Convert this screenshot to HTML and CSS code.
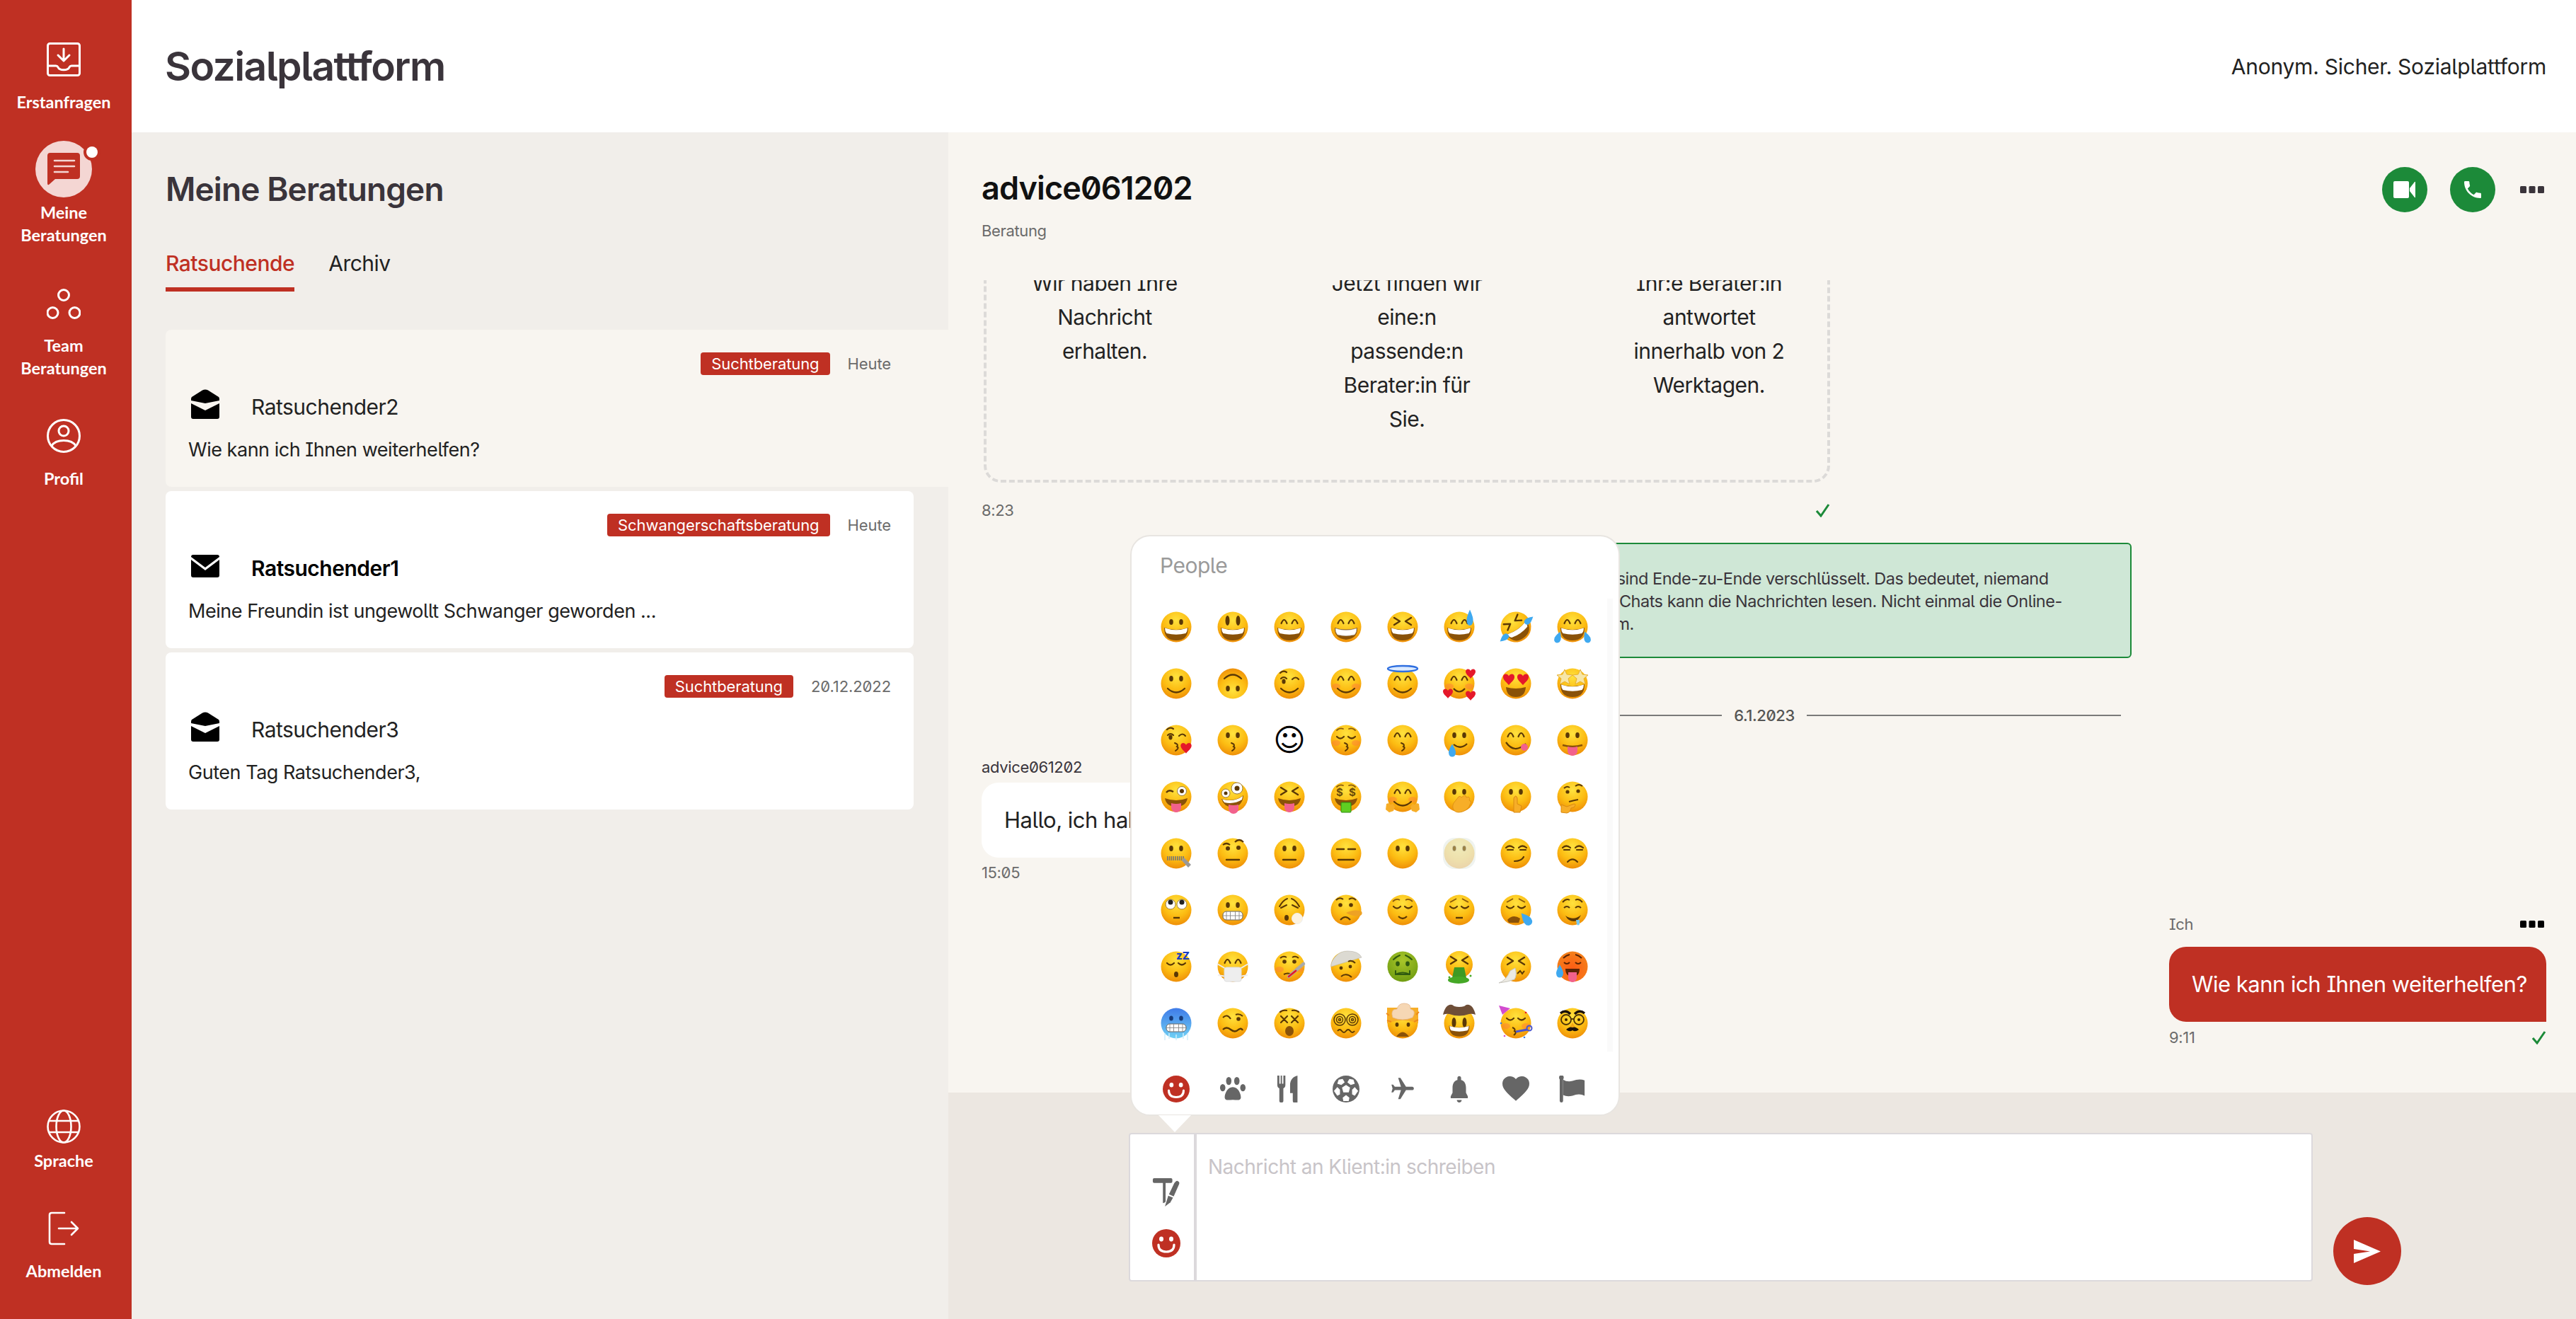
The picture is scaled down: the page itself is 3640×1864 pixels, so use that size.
FILE: index.html
```html
<!DOCTYPE html>
<html lang="de">
<head>
    <meta charset="utf-8">
    <title>Sozialplattform</title>
    <link rel="stylesheet" href="styles.css">
</head>
<body>
<!-- shared parts for the emoji -->
<svg class="sprite" aria-hidden="true">
    <defs>
        <radialGradient id="fc" cx=".5" cy=".28" r=".78"><stop offset="0" stop-color="#ffe23e"/><stop offset=".55" stop-color="#fcbc12"/><stop offset="1" stop-color="#ec8606"/></radialGradient>
        <radialGradient id="fg" cx=".5" cy=".3" r=".75"><stop offset="0" stop-color="#a8c62a"/><stop offset="1" stop-color="#6d9a10"/></radialGradient>
        <radialGradient id="fr" cx=".5" cy=".6" r=".75"><stop offset="0" stop-color="#ff5a14"/><stop offset="1" stop-color="#f08a1c"/></radialGradient>
        <linearGradient id="fb" x1="0" y1="0" x2="0" y2="1"><stop offset="0" stop-color="#3f7be8"/><stop offset="1" stop-color="#6fd0f4"/></linearGradient>
        <circle id="f" cx="22" cy="22" r="21.5" fill="url(#fc)"/>
        <g id="eo" fill="#5a3806"><ellipse cx="15" cy="15" rx="2.8" ry="4"/><ellipse cx="29" cy="15" rx="2.8" ry="4"/></g>
        <g id="el" fill="#5a3806"><ellipse cx="14.5" cy="13" rx="3" ry="7"/><ellipse cx="29.5" cy="13" rx="3" ry="7"/></g>
        <path id="ea" d="M10.5 17Q14.5 7 18.5 17M25.5 17Q29.5 7 33.5 17" fill="none" stroke="#5a3806" stroke-width="2.2" stroke-linecap="round"/>
        <path id="ex" d="M10 9L18 14L10 19M34 9L26 14L34 19" fill="none" stroke="#5a3806" stroke-width="2.4" stroke-linecap="round" stroke-linejoin="round"/>
        <path id="ec" d="M9 17Q14 22 19 17M25 17Q30 22 35 17" fill="none" stroke="#5a3806" stroke-width="2.2" stroke-linecap="round"/>
        <path id="eb" d="M9 8Q13 4 18 6M26 6Q31 4 35 8" fill="none" stroke="#8a5a0c" stroke-width="1.8" stroke-linecap="round"/>
        <g id="gr"><path d="M5 23Q22 29 39 23Q39 41 22 41Q5 41 5 23Z" fill="#8a5208"/><path d="M6 23.5Q22 29 38 23.5Q38 28 35.5 31Q22 34.5 8.5 31Q6 28 6 23.5Z" fill="#fff"/></g>
        <path id="sm" d="M10 29Q22 40 34 29" fill="none" stroke="#5a3806" stroke-width="2.2" stroke-linecap="round"/>
        <path id="ks" d="M20 26Q26 28 23 31Q27 33 21 37" fill="none" stroke="#5a3806" stroke-width="2" stroke-linecap="round"/>
        <path id="fl" d="M13 31H31" stroke="#5a3806" stroke-width="2.4" stroke-linecap="round"/>
        <path id="sd" d="M15 34Q22 27 29 34" fill="none" stroke="#5a3806" stroke-width="2.2" stroke-linecap="round"/>
        <g id="ck" fill="#ff7a3c" opacity=".45"><ellipse cx="8" cy="26" rx="6" ry="4"/><ellipse cx="36" cy="26" rx="6" ry="4"/></g>
        <path id="mt" d="M6 24Q22 30 38 24Q36 36 22 36Q8 36 6 24Z" fill="#8a5208"/>
        <path id="tg" d="M15 31Q22 33 29 31V37A7 7 0 0 1 15 37Z" fill="#f2618c"/>
        <path id="ht" d="M0-3C-2-7-7-6-7-2C-7 2-2 5 0 8C2 5 7 2 7-2C7-6 2-7 0-3Z" fill="#e5182a"/>
        <path id="dr" d="M0-7Q5 1 4 4A4 4 0 0 1-4 4Q-5 1 0-7Z" fill="#3fa9f0"/>
        <path id="wk" d="M10 15Q14 11 18 15M26 16Q31 11 35 16M9 7Q13 3 18 6" fill="none" stroke="#5a3806" stroke-width="2.2" stroke-linecap="round"/>
        <g id="we"><circle cx="14" cy="14" r="7" fill="#fff" stroke="#9a7a3a" stroke-width="1"/><circle cx="30" cy="14" r="7" fill="#fff" stroke="#9a7a3a" stroke-width="1"/></g>
        <path id="hd" d="M21 44C14 44 11 37 14 31L21 22Q24 20 25 23L29 20Q32 20 32 23L35 22Q38 24 36 27L38 28Q40 30 37 33C36 39 28 44 21 44Z" fill="#f7ae28" stroke="#d98a12" stroke-width=".8"/>
        <path id="st" d="M12 2L15 9L23 10L17 15L19 23L12 19L5 23L7 15L1 10L9 9Z" fill="#f6e6a8" stroke="#e8b030"/>
    </defs>
</svg>

<aside class="sidebar">
    <div class="nav-item first">
        <svg class="nav-icon" viewBox="0 0 48 48" fill="none" stroke="#fff" stroke-width="3" stroke-linecap="round" stroke-linejoin="round">
            <rect x="1.5" y="1.5" width="45" height="45" rx="3"/>
            <path d="M24 9V25M16 18L24 26L32 18M2 33H13Q15 33 16 35C18 40 30 40 32 35Q33 33 35 33H46"/>
        </svg>
        <span class="nav-label">Erstanfragen</span>
    </div>
    <div class="nav-item active">
        <div class="nav-bubble">
            <svg class="nav-icon" viewBox="0 0 48 48">
                <path d="M5 1H43A4 4 0 0 1 47 5V34A4 4 0 0 1 43 38H12L3 46Q1 47 1 44V5A4 4 0 0 1 5 1Z" fill="#bf3023"/>
                <path d="M11 12H39M11 20H39M11 28H30" stroke="#f4d6d3" stroke-width="2.6" stroke-linecap="round"/>
            </svg>
            <span class="nav-dot"></span>
        </div>
        <span class="nav-label">Meine<br>Beratungen</span>
    </div>
    <div class="nav-item">
        <svg class="nav-icon" viewBox="0 0 48 48" fill="none" stroke="#fff" stroke-width="3">
            <circle cx="24" cy="13" r="7.5"/><circle cx="8.5" cy="38" r="7.5"/><circle cx="39.5" cy="38" r="7.5"/>
        </svg>
        <span class="nav-label">Team<br>Beratungen</span>
    </div>
    <div class="nav-item">
        <svg class="nav-icon" viewBox="0 0 48 48" fill="none" stroke="#fff" stroke-width="3" stroke-linecap="round">
            <circle cx="24" cy="24" r="22.5"/><circle cx="24" cy="17" r="7"/>
            <path d="M7 38C13 28 35 28 41 38"/>
        </svg>
        <span class="nav-label">Profil</span>
    </div>
    <div class="nav-item bottom tight">
        <svg class="nav-icon" viewBox="0 0 48 48" fill="none" stroke="#fff" stroke-width="2.6">
            <circle cx="24" cy="24" r="22.5"/><ellipse cx="24" cy="24" rx="10.5" ry="22.5"/>
            <path d="M3 16H45M3 32H45"/>
        </svg>
        <span class="nav-label">Sprache</span>
    </div>
    <div class="nav-item">
        <svg class="nav-icon" viewBox="0 0 48 48" fill="none" stroke="#fff" stroke-width="2.6" stroke-linecap="round" stroke-linejoin="round">
            <path d="M25 2H7Q4 2 4 5V43Q4 46 7 46H25M17 24H43M35 15L44 24L35 33"/>
        </svg>
        <span class="nav-label">Abmelden</span>
    </div>
</aside>

<div class="main">
    <header class="topbar">
        <h1 class="brand">Sozialplattform</h1>
        <span class="claim">Anonym. Sicher. Sozialplattform</span>
    </header>

    <div class="content">
        <section class="panel">
            <h2 class="panel-title">Meine Beratungen</h2>
            <div class="tabs">
                <span class="tab current">Ratsuchende</span>
                <span class="tab">Archiv</span>
            </div>
            <div class="cards">
                <article class="card selected">
                    <div class="card-top"><span class="tag">Suchtberatung</span><span class="card-date">Heute</span></div>
                    <div class="card-name">
                        <svg class="env" viewBox="0 0 40 42"><path d="M16 1.5Q20-.5 24 1.5L39 11Q40 12 40 14V16L20 20L0 16V14Q0 12 1 11Z"/><path d="M0 20L20 30L40 20V39Q40 42 37 42H3Q0 42 0 39Z"/></svg>
                        <span>Ratsuchender2</span>
                    </div>
                    <p class="card-text">Wie kann ich Ihnen weiterhelfen?</p>
                </article>
                <article class="card">
                    <div class="card-top"><span class="tag">Schwangerschaftsberatung</span><span class="card-date">Heute</span></div>
                    <div class="card-name unread">
                        <svg class="env closed" viewBox="0 0 40 32"><path d="M3 0H37Q40 0 40 3L20 18L0 3Q0 0 3 0Z"/><path d="M0 7L20 22L40 7V29Q40 32 37 32H3Q0 32 0 29Z"/></svg>
                        <span>Ratsuchender1</span>
                    </div>
                    <p class="card-text">Meine Freundin ist ungewollt Schwanger geworden ...</p>
                </article>
                <article class="card">
                    <div class="card-top"><span class="tag">Suchtberatung</span><span class="card-date">20.12.2022</span></div>
                    <div class="card-name">
                        <svg class="env" viewBox="0 0 40 42"><path d="M16 1.5Q20-.5 24 1.5L39 11Q40 12 40 14V16L20 20L0 16V14Q0 12 1 11Z"/><path d="M0 20L20 30L40 20V39Q40 42 37 42H3Q0 42 0 39Z"/></svg>
                        <span>Ratsuchender3</span>
                    </div>
                    <p class="card-text">Guten Tag Ratsuchender3,</p>
                </article>
            </div>
        </section>

        <section class="chat">
            <div class="chat-head">
                <div class="chat-who">
                    <div class="chat-name">advice061202</div>
                    <div class="chat-sub">Beratung</div>
                </div>
                <div class="chat-actions">
                    <span class="round-btn"><svg viewBox="0 0 32 24" fill="#fff"><rect x="0" y="0" width="22" height="24" rx="2"/><path d="M23 10L30 1Q31 0 31 2V22Q31 24 30 23L23 14Z"/></svg></span>
                    <span class="round-btn"><svg viewBox="0 0 24 24" fill="#fff"><path d="M6.62 10.79c1.44 2.83 3.76 5.14 6.59 6.59l2.2-2.2c.27-.27.67-.36 1.02-.24 1.12.37 2.33.57 3.57.57.55 0 1 .45 1 1V20c0 .55-.45 1-1 1-9.39 0-17-7.61-17-17 0-.55.45-1 1-1h3.5c.55 0 1 .45 1 1 0 1.25.2 2.45.57 3.57.11.35.03.74-.25 1.02l-2.2 2.2z"/></svg></span>
                    <svg class="dots big" viewBox="0 0 34 10" fill="#3a343b"><rect width="9" height="10" rx="1.5"/><rect x="12.5" width="9" height="10" rx="1.5"/><rect x="25" width="9" height="10" rx="1.5"/></svg>
                </div>
            </div>

            <div class="messages">
                <div class="welcome">
                    <div class="steps">
                        <p class="step">Wir haben Ihre<br>Nachricht<br>erhalten.</p>
                        <p class="step">Jetzt finden wir<br>eine:n<br>passende:n<br>Berater:in für<br>Sie.</p>
                        <p class="step">Ihr:e Berater:in<br>antwortet<br>innerhalb von 2<br>Werktagen.</p>
                    </div>
                    <div class="meta first-meta"><span>8:23</span><svg class="check" viewBox="0 0 20 19" fill="none" stroke="#1c8a39" stroke-width="3"><path d="M1 10L7 17L18 1"/></svg></div>
                </div>

                <div class="notice">Ihre Nachrichten sind Ende-zu-Ende verschlüsselt. Das bedeutet, niemand<br>außerhalb dieses Chats kann die Nachrichten lesen. Nicht einmal die Online-<br>Beratungsplattform.</div>

                <div class="day"><span class="day-line"></span><span class="day-text">6.1.2023</span><span class="day-line"></span></div>

                <div class="msg">
                    <div class="msg-from">advice061202</div>
                    <div class="bubble in">Hallo, ich habe Ihre Nachricht gelesen.</div>
                    <div class="msg-time">15:05</div>
                </div>

                <div class="msg mine">
                    <div class="msg-head"><span class="msg-from">Ich</span><svg class="dots" viewBox="0 0 34 10" fill="#000"><rect width="9" height="10" rx="1.5"/><rect x="12.5" width="9" height="10" rx="1.5"/><rect x="25" width="9" height="10" rx="1.5"/></svg></div>
                    <div class="bubble out">Wie kann ich Ihnen weiterhelfen?</div>
                    <div class="meta"><span>9:11</span><svg class="check" viewBox="0 0 20 19" fill="none" stroke="#1c8a39" stroke-width="3"><path d="M1 10L7 17L18 1"/></svg></div>
                </div>
            </div>

            <div class="composer">
                <div class="input">
                    <div class="input-tools">
                        <svg class="tool" viewBox="0 0 40 42" fill="#666"><path d="M2 0H27Q29 0 29 2V5Q29 7 27 7H19V34Q19 36 15 37V7H2Q0 7 0 5V2Q0 0 2 0Z"/><path d="M34 5Q36 3 38 5Q40 6 39 9L31 27L24 24L32 7Z"/><path d="M23 26L30 29L26 36L18 42Z"/></svg>
                        <svg class="tool" viewBox="0 0 40 40"><circle cx="20" cy="20" r="20" fill="#bf3023"/><ellipse cx="13" cy="14" rx="3" ry="3.4" fill="#fff"/><ellipse cx="27" cy="14" rx="3" ry="3.4" fill="#fff"/><path d="M9 22Q9 32 20 32Q31 32 31 22" fill="none" stroke="#fff" stroke-width="3.2" stroke-linecap="round"/></svg>
                    </div>
                    <div class="input-field">Nachricht an Klient:in schreiben</div>
                </div>
                <span class="send"><svg viewBox="0 0 38 33" fill="#fff"><path d="M0 0L38 16.5L0 33V20L23 16.5L0 13Z"/></svg></span>
            </div>

            <div class="picker">
                <div class="picker-title">People</div>
                <div class="emoji-scroll">
                    <div class="emoji-grid">
                        <!-- row 1 -->
                        <svg class="emo" viewBox="0 0 44 44"><use href="#f"/><use href="#eo"/><use href="#gr"/></svg>
                        <svg class="emo" viewBox="0 0 44 44"><use href="#f"/><use href="#el"/><use href="#gr"/></svg>
                        <svg class="emo" viewBox="0 0 44 44"><use href="#f"/><use href="#ea"/><use href="#gr"/></svg>
                        <svg class="emo" viewBox="0 0 44 44"><use href="#f"/><use href="#ea"/><path d="M6 23Q22 28 38 23Q39 38 22 40Q5 38 6 23Z" fill="#8a5208"/><path d="M7 24Q22 29 37 24Q37 30 34 33Q22 36 10 33Q7 30 7 24Z" fill="#fff" stroke="#bbb" stroke-width=".6"/></svg>
                        <svg class="emo" viewBox="0 0 44 44"><use href="#f"/><use href="#ex"/><use href="#gr"/></svg>
                        <svg class="emo" viewBox="0 0 44 44"><use href="#f"/><use href="#ea"/><use href="#gr"/><use href="#dr" transform="translate(37 8) scale(1.1 1.5)"/></svg>
                        <svg class="emo" viewBox="0 0 44 44"><g transform="rotate(-35 22 22)"><use href="#f"/><use href="#ex"/><use href="#gr"/></g><use href="#dr" transform="translate(41 12) rotate(50)"/><use href="#dr" transform="translate(5 38) rotate(-130)"/></svg>
                        <svg class="emo" viewBox="0 0 44 44"><use href="#f"/><use href="#ea"/><use href="#gr"/><use href="#dr" transform="translate(2 36) rotate(20) scale(1.1)"/><use href="#dr" transform="translate(42 36) rotate(-20) scale(1.1)"/></svg>
                        <!-- row 2 -->
                        <svg class="emo" viewBox="0 0 44 44"><use href="#f"/><use href="#eo"/><use href="#sm"/></svg>
                        <svg class="emo" viewBox="0 0 44 44"><g transform="rotate(180 22 22)"><use href="#f"/><use href="#eo"/><use href="#sm"/></g></svg>
                        <svg class="emo" viewBox="0 0 44 44"><use href="#f"/><use href="#wk"/><ellipse cx="14" cy="19" rx="2.6" ry="3.6" fill="#5a3806"/><use href="#sm"/></svg>
                        <svg class="emo" viewBox="0 0 44 44"><use href="#f"/><use href="#ck"/><use href="#ea"/><use href="#sm"/></svg>
                        <svg class="emo" viewBox="0 0 44 44"><use href="#f"/><use href="#ea"/><use href="#sm"/><ellipse cx="22" cy="1" rx="21" ry="4" fill="#dbeaff" stroke="#2f6fe0" stroke-width="2.4"/></svg>
                        <svg class="emo" viewBox="0 0 44 44"><use href="#f"/><use href="#ck"/><use href="#ea"/><path d="M14 29Q22 38 30 29" fill="none" stroke="#5a3806" stroke-width="2.2"/><use href="#ht" transform="translate(38 7)"/><use href="#ht" transform="translate(6 35)"/><use href="#ht" transform="translate(38 38)"/></svg>
                        <svg class="emo" viewBox="0 0 44 44"><use href="#f"/><use href="#ht" transform="translate(12 15) scale(1.15)"/><use href="#ht" transform="translate(32 15) scale(1.15)"/><path d="M8 27Q22 31 36 27Q35 41 22 41Q9 41 8 27Z" fill="#8a5208"/></svg>
                        <svg class="emo" viewBox="0 0 44 44"><use href="#f"/><use href="#gr"/><use href="#st" x="-1"/><use href="#st" x="21"/></svg>
                        <!-- row 3 -->
                        <svg class="emo" viewBox="0 0 44 44"><use href="#f"/><use href="#wk"/><ellipse cx="14" cy="18" rx="2.6" ry="3.4" fill="#5a3806"/><use href="#ks"/><use href="#ht" transform="translate(36 32) scale(1.1)"/></svg>
                        <svg class="emo" viewBox="0 0 44 44"><use href="#f"/><use href="#eo"/><use href="#ks"/></svg>
                        <span class="emo-text">☺</span>
                        <svg class="emo" viewBox="0 0 44 44"><use href="#f"/><use href="#ck"/><use href="#eb"/><use href="#ec"/><use href="#ks"/></svg>
                        <svg class="emo" viewBox="0 0 44 44"><use href="#f"/><use href="#ea"/><use href="#ks"/></svg>
                        <svg class="emo" viewBox="0 0 44 44"><use href="#f"/><use href="#eo"/><path d="M14 28Q24 36 33 27" fill="none" stroke="#5a3806" stroke-width="2.2"/><use href="#dr" transform="translate(12 36) scale(1.2)"/></svg>
                        <svg class="emo" viewBox="0 0 44 44"><use href="#f"/><use href="#ea"/><path d="M8 25Q20 42 36 27" fill="none" stroke="#5a3806" stroke-width="2.2"/><circle cx="34" cy="32" r="5" fill="#f2618c"/></svg>
                        <svg class="emo" viewBox="0 0 44 44"><use href="#f"/><use href="#eo"/><path d="M8 29Q22 33 36 29" fill="none" stroke="#8a5208" stroke-width="2.4"/><use href="#tg"/></svg>
                        <!-- row 4 -->
                        <svg class="emo" viewBox="0 0 44 44"><use href="#f"/><circle cx="30" cy="14" r="6.5" fill="#fff" stroke="#9a7a3a"/><circle cx="30" cy="14" r="3" fill="#5a3806"/><path d="M8 16Q12 11 18 15" fill="none" stroke="#5a3806" stroke-width="2.4"/><use href="#mt"/><use href="#tg"/></svg>
                        <svg class="emo" viewBox="0 0 44 44"><use href="#f"/><circle cx="12" cy="17" r="6" fill="#fff" stroke="#9a7a3a"/><circle cx="12" cy="17" r="2.5" fill="#5a3806"/><circle cx="28" cy="10" r="8" fill="#fff" stroke="#9a7a3a"/><circle cx="28" cy="10" r="3.5" fill="#5a3806"/><path d="M6 25Q24 30 37 20Q36 35 22 37Q9 36 6 25Z" fill="#8a5208"/><path d="M7 25.5Q24 30 36 21L35 26Q24 33 10 30Z" fill="#fff"/><use href="#tg" transform="translate(1 2)"/></svg>
                        <svg class="emo" viewBox="0 0 44 44"><use href="#f"/><use href="#ex"/><use href="#mt"/><use href="#tg"/></svg>
                        <svg class="emo" viewBox="0 0 44 44"><use href="#f"/><use href="#eb"/><text class="dollar" x="8" y="21">$</text><text class="dollar" x="26" y="21">$</text><use href="#mt"/><rect x="15" y="30" width="14" height="14" rx="1" fill="#5fce22" stroke="#2f8c10"/></svg>
                        <svg class="emo" viewBox="0 0 44 44"><use href="#f"/><use href="#ck"/><use href="#ea"/><use href="#sm"/><path d="M-1 32L2 31L5 33L8 32L11 36L9 42L3 44L-2 40Z" fill="#f7ae28"/><path d="M45 32L42 31L39 33L36 32L33 36L35 42L41 44L46 40Z" fill="#f7ae28"/></svg>
                        <svg class="emo" viewBox="0 0 44 44"><use href="#f"/><use href="#eo"/><use href="#hd"/></svg>
                        <svg class="emo" viewBox="0 0 44 44"><use href="#f"/><use href="#eo"/><path d="M19 44V24Q22 18 24 24V32L30 35L28 44Z" fill="#f7ae28" stroke="#d98a12"/></svg>
                        <svg class="emo" viewBox="0 0 44 44"><use href="#f"/><path d="M10 10Q14 6 18 9M26 7Q31 3 36 7" fill="none" stroke="#5a3806" stroke-width="2"/><circle cx="15" cy="15" r="2.6" fill="#5a3806"/><circle cx="30" cy="14" r="2.6" fill="#5a3806"/><path d="M17 29Q24 27 30 26" fill="none" stroke="#5a3806" stroke-width="2"/><path d="M6 44V33L14 36L24 32Q28 32 24 37L20 38Q19 44 14 45Z" fill="#f7ae28" stroke="#d98a12"/></svg>
                        <!-- row 5 -->
                        <svg class="emo" viewBox="0 0 44 44"><use href="#f"/><use href="#eo"/><path d="M9 29H34" stroke="#777" stroke-width="6" stroke-dasharray="1.6 1.2"/><path d="M33 28L43 38L39 42L30 32Z" fill="#999"/></svg>
                        <svg class="emo" viewBox="0 0 44 44"><use href="#f"/><path d="M8 10Q13 6 18 10M25 6Q31 0 37 6" fill="none" stroke="#5a3806" stroke-width="2.2"/><circle cx="15" cy="15" r="3" fill="#5a3806"/><circle cx="30" cy="14" r="3" fill="#5a3806"/><use href="#fl"/></svg>
                        <svg class="emo" viewBox="0 0 44 44"><use href="#f"/><use href="#eo"/><use href="#fl"/></svg>
                        <svg class="emo" viewBox="0 0 44 44"><use href="#f"/><path d="M9 16H19M25 16H35M11 31H33" stroke="#5a3806" stroke-width="2.4" stroke-linecap="round"/></svg>
                        <svg class="emo" viewBox="0 0 44 44"><use href="#f"/><use href="#eo"/></svg>
                        <svg class="emo" viewBox="0 0 44 44"><use href="#f"/><use href="#eo"/><rect x="-1" y="0" width="46" height="44" rx="16" fill="#e9eee9" opacity=".72"/><ellipse cx="15" cy="15" rx="2.2" ry="3.4" fill="#8a6a1a" opacity=".7"/><ellipse cx="29" cy="15" rx="2.2" ry="3.4" fill="#8a6a1a" opacity=".7"/></svg>
                        <svg class="emo" viewBox="0 0 44 44"><use href="#f"/><path d="M8 14Q13 9 19 14M26 14Q31 9 37 14M10 17H18M28 17H36M20 33Q30 33 33 27" fill="none" stroke="#5a3806" stroke-width="2.2" stroke-linecap="round"/></svg>
                        <svg class="emo" viewBox="0 0 44 44"><use href="#f"/><path d="M8 14Q13 9 19 14M26 14Q31 9 37 14M10 17H18M28 17H36" fill="none" stroke="#5a3806" stroke-width="2.2" stroke-linecap="round"/><use href="#sd"/></svg>
                        <!-- row 6 -->
                        <svg class="emo" viewBox="0 0 44 44"><use href="#f"/><use href="#we"/><circle cx="14" cy="11" r="3.5" fill="#222"/><circle cx="30" cy="11" r="3.5" fill="#222"/><path d="M18 33H27" stroke="#5a3806" stroke-width="2.4"/></svg>
                        <svg class="emo" viewBox="0 0 44 44"><use href="#f"/><use href="#eo"/><rect x="8" y="24" width="28" height="12" rx="5" fill="#fff" stroke="#666"/><path d="M8 30H36M13 24V36M18.5 24V36M25.5 24V36M31 24V36" stroke="#888" stroke-width=".9"/></svg>
                        <svg class="emo" viewBox="0 0 44 44"><use href="#f"/><path d="M8 17Q13 8 19 6M36 17Q31 8 25 6M10 19L18 15M34 19L26 15" fill="none" stroke="#5a3806" stroke-width="2" stroke-linecap="round"/><ellipse cx="18" cy="33" rx="3" ry="4" fill="#5a3806"/><circle cx="33" cy="34" r="7.5" fill="#fdf3df" stroke="#eee"/></svg>
                        <svg class="emo" viewBox="0 0 44 44"><use href="#f"/><path d="M8 8Q13 3 18 7M26 7Q31 3 36 8M14 36Q21 28 28 36" fill="none" stroke="#5a3806" stroke-width="2.1"/><circle cx="14" cy="15" r="2.8" fill="#5a3806"/><circle cx="29" cy="15" r="2.8" fill="#5a3806"/><path d="M22 26Q34 20 44 24Q46 28 42 30Q32 32 22 26Z" fill="#eea224"/></svg>
                        <svg class="emo" viewBox="0 0 44 44"><use href="#f"/><path d="M8 10Q13 5 18 8M26 8Q31 5 36 10" fill="none" stroke="#8a5a0c" stroke-width="1.8"/><use href="#ec"/><path d="M16 31Q22 37 28 31" fill="none" stroke="#5a3806" stroke-width="2.2"/></svg>
                        <svg class="emo" viewBox="0 0 44 44"><use href="#f"/><path d="M9 11Q13 9 18 6M26 6Q31 9 35 11" fill="none" stroke="#8a5a0c" stroke-width="1.8"/><use href="#ec"/><path d="M17 33H27" stroke="#5a3806" stroke-width="2.4"/></svg>
                        <svg class="emo" viewBox="0 0 44 44"><use href="#f"/><path d="M9 11Q13 9 18 6M26 6Q31 9 35 11" fill="none" stroke="#8a5a0c" stroke-width="1.8"/><use href="#ec"/><path d="M10 36Q18 27 28 34L26 40H12Z" fill="#8a5208"/><use href="#dr" transform="translate(36 34) rotate(-40) scale(1.4)"/></svg>
                        <svg class="emo" viewBox="0 0 44 44"><use href="#f"/><path d="M8 11Q13 5 18 8M26 8Q31 5 36 11M10 19Q14 15 18 19M26 19Q30 15 34 19" fill="none" stroke="#5a3806" stroke-width="2"/><path d="M12 30Q24 38 34 29Q30 38 24 38Q16 38 12 30Z" fill="#5a3806"/><path d="M27 36H32V42Q30 45 28 42Z" fill="#79c8f0"/></svg>
                        <!-- row 7 -->
                        <svg class="emo" viewBox="0 0 44 44"><use href="#f"/><use href="#ec"/><ellipse cx="22" cy="33" rx="3" ry="4" fill="#5a3806"/><text class="zzz" x="22" y="12">zZ</text></svg>
                        <svg class="emo" viewBox="0 0 44 44"><use href="#f"/><use href="#ea"/><path d="M0 18L12 25M44 18L32 25M1 34L12 36M43 34L32 36" stroke="#eee" stroke-width="2"/><rect x="10" y="23" width="24" height="20" rx="3" fill="#eee" stroke="#ddd"/></svg>
                        <svg class="emo" viewBox="0 0 44 44"><use href="#f"/><use href="#ck"/><path d="M9 10Q13 6 18 9M26 9Q31 6 35 10" fill="none" stroke="#5a3806" stroke-width="2"/><circle cx="15" cy="15" r="2.8" fill="#5a3806"/><circle cx="29" cy="15" r="2.8" fill="#5a3806"/><path d="M14 33Q20 30 25 33" fill="none" stroke="#5a3806" stroke-width="2"/><path d="M21 36L42 18" stroke="#aaa" stroke-width="4.5" stroke-linecap="round"/><path d="M21 36L31 28" stroke="#e5182a" stroke-width="2.6" stroke-linecap="round"/></svg>
                        <svg class="emo" viewBox="0 0 44 44"><use href="#f"/><path d="M8 7L6 9Q0 16 1 22L44 9Q40 0 24 0Q14 0 8 7Z" fill="#dcdad2" stroke="#b8b6ae" stroke-width=".6"/><circle cx="15" cy="24" r="2.4" fill="#5a3806"/><circle cx="28" cy="22" r="2.4" fill="#5a3806"/><path d="M15 36Q22 30 30 37M25 15Q30 12 35 17" fill="none" stroke="#5a3806" stroke-width="2"/></svg>
                        <svg class="emo" viewBox="0 0 44 44"><circle cx="22" cy="22" r="21.5" fill="url(#fg)"/><path d="M9 12Q13 8 18 6M26 6Q31 8 35 12M12 28V33H32V28M12 33Q22 28 32 33" fill="none" stroke="#2f5a10" stroke-width="2" stroke-linecap="round"/><ellipse cx="15" cy="18" rx="2.8" ry="3.4" fill="#2f5a10"/><ellipse cx="29" cy="18" rx="2.8" ry="3.4" fill="#2f5a10"/></svg>
                        <svg class="emo" viewBox="0 0 44 44"><circle cx="22" cy="19" r="19" fill="url(#fc)"/><use href="#ex" transform="translate(0 -1)"/><path d="M15 23H29L32 38H12Z" fill="#3e9a24"/><ellipse cx="21" cy="41" rx="15" ry="5" fill="#45a826"/><circle cx="8" cy="37" r="1.5" fill="#45a826"/><circle cx="38" cy="35" r="1.5" fill="#45a826"/></svg>
                        <svg class="emo" viewBox="0 0 44 44"><use href="#f"/><use href="#ex"/><path d="M24 32L28 28L31 32L34 28" fill="none" stroke="#5a3806" stroke-width="2"/><path d="M-2 45Q8 42 14 28L21 24Q24 34 20 40Q10 44-2 45Z" fill="#eceae2" stroke="#c8c6be"/></svg>
                        <svg class="emo" viewBox="0 0 44 44"><circle cx="22" cy="22" r="21.5" fill="url(#fr)"/><path d="M9 10Q13 6 18 5M26 5Q31 6 35 10M10 16Q14 20 18 16M26 16Q30 20 34 16" fill="none" stroke="#5a2406" stroke-width="2"/><path d="M12 25H32Q32 36 22 36Q12 36 12 25Z" fill="#5a2406"/><path d="M16 30H28V38A6 6 0 0 1 16 38Z" fill="#f2618c"/><use href="#dr" transform="translate(4 28) scale(1.2)"/></svg>
                        <!-- row 8 -->
                        <svg class="emo" viewBox="0 0 44 44"><circle cx="22" cy="22" r="21.5" fill="url(#fb)"/><ellipse cx="15" cy="15" rx="2.8" ry="3.6" fill="#173a78"/><ellipse cx="29" cy="15" rx="2.8" ry="3.6" fill="#173a78"/><rect x="8" y="23" width="28" height="11" rx="5" fill="#fff" stroke="#666"/><path d="M8 28.5H36M13 23V34M18.5 23V34M25.5 23V34M31 23V34" stroke="#888" stroke-width=".9"/><path d="M6 36V46M12 36V44M22 38V46M32 36V44M38 36V46" stroke="#cfeefb" stroke-width="1.5"/></svg>
                        <svg class="emo" viewBox="0 0 44 44"><use href="#f"/><path d="M8 14Q14 8 19 16M26 10Q31 8 36 12" fill="none" stroke="#5a3806" stroke-width="2"/><circle cx="30" cy="16" r="2.8" fill="#5a3806"/><path d="M8 31Q13 26 19 31Q25 36 30 31Q34 28 36 32" fill="none" stroke="#5a3806" stroke-width="2.4"/></svg>
                        <svg class="emo" viewBox="0 0 44 44"><use href="#f"/><path d="M9 6Q13 3 18 4M26 4Q31 3 35 6M10 12L19 21M19 12L10 21M25 12L34 21M34 12L25 21" fill="none" stroke="#5a3806" stroke-width="2.2" stroke-linecap="round"/><ellipse cx="22" cy="33" rx="6" ry="7" fill="#8a5208"/></svg>
                        <svg class="emo" viewBox="0 0 44 44"><use href="#f"/><g fill="none" stroke="#5a3806" stroke-width="1.5"><circle cx="13" cy="17" r="8"/><circle cx="13" cy="17" r="4.5"/><circle cx="13" cy="17" r="1.5"/><circle cx="31" cy="17" r="8"/><circle cx="31" cy="17" r="4.5"/><circle cx="31" cy="17" r="1.5"/><path d="M10 33Q13 29 16 33T22 33T28 33T34 33" stroke-width="2"/></g></svg>
                        <svg class="emo" viewBox="0 0 44 44"><use href="#f"/><path d="M0 22Q22 14 44 22V0H0Z" fill="#f7ae28"/><path d="M8 14Q4 2 14 2Q16-6 24-6Q34-6 33 2Q42 4 36 14Q22 20 8 14Z" fill="#f6d7b4" stroke="#e4b68a" stroke-width=".8"/><path d="M-1 8L3 11M45 6L41 10M0 18L6 20M44 17L38 20" stroke="#ee8a1c" stroke-width="2"/><ellipse cx="14" cy="24" rx="2.4" ry="3" fill="#5a3806"/><ellipse cx="30" cy="24" rx="2.4" ry="3" fill="#5a3806"/><path d="M13 41Q22 28 31 41Z" fill="#8a5208"/></svg>
                        <svg class="emo" viewBox="0 0 44 44"><use href="#f"/><use href="#el" transform="translate(0 8)"/><use href="#gr" transform="translate(3.3 6) scale(.85)"/><path d="M-1 10Q3-6 12-4L15-2Q22 0 29-2L32-4Q41-6 45 10Q40 8 36 9Q22 14 8 9Q4 8-1 10Z" fill="#6e4e38"/></svg>
                        <svg class="emo" viewBox="0 0 44 44"><use href="#f"/><use href="#ck"/><use href="#ec" transform="translate(0 -2)"/><path d="M17 28Q22 30 20 33Q24 35 19 39" fill="none" stroke="#5a3806" stroke-width="2"/><path d="M-2-3L14 1L3 10Z" fill="#d24ccf"/><path d="M22 34L38 31" stroke="#4a55d0" stroke-width="3"/><circle cx="41" cy="29" r="3.5" fill="none" stroke="#4a55d0" stroke-width="2"/><circle cx="1" cy="22" r="1.3" fill="#3a7ce0"/><circle cx="36" cy="7" r="1.3" fill="#e5182a"/><circle cx="6" cy="40" r="1.3" fill="#d24ccf"/><circle cx="34" cy="42" r="1.3" fill="#3a7ce0"/></svg>
                        <svg class="emo" viewBox="0 0 44 44"><use href="#f"/><path d="M5 8Q12 2 19 9M39 8Q32 2 25 9" fill="none" stroke="#1a120a" stroke-width="3.5"/><g fill="none" stroke="#4a3206" stroke-width="1.8"><circle cx="13" cy="17" r="7"/><circle cx="31" cy="17" r="7"/><path d="M20 16H24"/></g><circle cx="13" cy="17" r="2" fill="#3a2404"/><circle cx="31" cy="17" r="2" fill="#3a2404"/><path d="M22 21L26 28H18Z" fill="#f2a814"/><path d="M13 31Q18 26 22 28Q26 26 31 31Q26 35 22 32Q18 35 13 31Z" fill="#1a120a"/></svg>
                    </div>
                </div>
                <div class="picker-tabs">
                    <svg class="cat" viewBox="0 0 40 40"><circle cx="20" cy="20" r="20" fill="#bf3023"/><ellipse cx="13" cy="14" rx="3" ry="3.4" fill="#fff"/><ellipse cx="27" cy="14" rx="3" ry="3.4" fill="#fff"/><path d="M9 22Q9 32 20 32Q31 32 31 22" fill="none" stroke="#fff" stroke-width="3.2" stroke-linecap="round"/></svg>
                    <svg class="cat" viewBox="0 0 40 40" fill="#666"><ellipse cx="14" cy="8" rx="4" ry="6"/><ellipse cx="26" cy="8" rx="4" ry="6"/><ellipse cx="5" cy="18" rx="4" ry="5.5"/><ellipse cx="35" cy="18" rx="4" ry="5.5"/><path d="M20 17C12 17 8 27 8 32C8 38 14 36 20 36C26 36 32 38 32 32C32 27 28 17 20 17Z"/></svg>
                    <svg class="cat" viewBox="0 0 40 40" fill="#666"><path d="M3 0H5V12H7V0H9V12H11V0H14V14Q14 18 11 19V38Q11 40 9 40H7Q5 40 5 38V19Q2 18 2 14V0Z"/><path d="M32 0V40H27Q25 40 25 37V26H21V14Q21 3 32 0Z"/></svg>
                    <svg class="cat" viewBox="0 0 40 40"><circle cx="20" cy="20" r="20" fill="#666"/><path d="M20 14L26 18L24 25H16L14 18Z" fill="#fff"/><path d="M9 6L15 5L18 10L13 14L7 12ZM31 6L25 5L22 10L27 14L33 12ZM2 23L7 17L11 21L11 28L7 30ZM38 23L33 17L29 21L29 28L33 30ZM15 33L20 29L25 33L24 38H16Z" fill="#fff"/></svg>
                    <svg class="cat" viewBox="0 0 24 24" fill="#666"><path d="M21 16v-2l-8-5V3.5c0-.83-.67-1.5-1.5-1.5S10 2.67 10 3.5V9l-8 5v2l8-2.5V19l-2 1.5V22l3.5-1 3.5 1v-1.5L13 19v-5.5l8 2.5z" transform="rotate(90 12 12)"/></svg>
                    <svg class="cat" viewBox="3 1 18 22" fill="#666"><path d="M12 23c1.1 0 2-.9 2-2h-4c0 1.1.89 2 2 2zm7-5l-1.5-3v-4c0-3.07-1.14-5.64-4-6.32V3c0-.83-.67-1.5-1.5-1.5s-1.500.67-1.500 1.500v1.680C7.630 5.360 6.500 7.920 6.500 11v4L5 18v1.500h14z"/></svg>
                    <svg class="cat" viewBox="2 3 20 19" fill="#666"><path d="M12 21.35l-1.45-1.32C5.4 15.36 2 12.28 2 8.5 2 5.42 4.42 3 7.5 3c1.74 0 3.41.81 4.5 2.09C13.09 3.81 14.76 3 16.5 3 19.58 3 22 5.42 22 8.5c0 3.78-3.4 6.86-8.55 11.54L12 21.35z"/></svg>
                    <svg class="cat" viewBox="0 0 40 40" fill="#666"><rect x="1" y="2" width="5" height="38" rx="2.5"/><circle cx="3.5" cy="3" r="3.5"/><path d="M6 6Q12 10 20 8Q30 4 38 7V30Q30 26 20 30Q12 32 6 29Z"/></svg>
                </div>
                <span class="picker-arrow"></span>
            </div>
        </section>
    </div>
</div>
</body>
</html>
```

FILE: styles.css
```css
*{margin: 0; padding: 0; box-sizing: border-box;}
html,body{height: 100%;}
body{display: flex; height: 1864px; overflow: hidden; background: #f1eeea; color: #222;
    font-family: Inter, "Noto Sans", sans-serif;
    font-feature-settings: "zero", "cv08", "ss02";}
.sprite{flex: none; width: 0; height: 0;}

/* left red bar */
.sidebar{flex: none; width: 186px; display: flex; flex-direction: column; padding-bottom: 52px; background: #bf3023; color: #fff;}
.nav-item{width: 180px; display: flex; flex-direction: column; align-items: center; margin-top: 56px;}
.nav-item.first{margin-top: 60px;}
.nav-item.active{margin-top: 39px;}
.nav-item.bottom{margin-top: auto;}
.nav-icon{display: block; width: 48px; height: 48px;}
.nav-label{margin-top: 20px; font-family: Lato, sans-serif; font-size: 23.5px; font-weight: 700; line-height: 32px; text-align: center;}
.nav-item.active .nav-label{margin-top: 5px;}
.nav-item.tight .nav-label{margin-top: 8px;}
.nav-bubble{position: relative; width: 80px; height: 80px; display: flex; align-items: center; justify-content: center; border-radius: 50%; background: #f4d6d3;}
.nav-dot{position: absolute; top: 8px; right: -8px; width: 16px; height: 16px; border-radius: 50%; background: #fff; box-shadow: 0 0 0 4px #bf3023;}

/* top header */
.main{flex: 1; min-width: 0; display: flex; flex-direction: column;}
.topbar{flex: none; height: 187px; display: flex; align-items: center; justify-content: space-between; padding: 0 42px 0 47px; background: #fff;}
.brand{font-size: 57px; font-weight: 600; color: #3a343b; letter-spacing: -1.6px;}
.claim{font-size: 30px; color: #222; letter-spacing: -.25px;}

.content{flex: 1; min-height: 0; display: flex;}

/* list of chats */
.panel{flex: none; width: 1154px; padding: 50px 49px 0 48px;}
.panel-title{font-size: 46px; font-weight: 600; line-height: 60px; color: #3a343b; letter-spacing: -.9px;}
.tabs{display: flex; gap: 48px; margin-top: 55px;}
.tab{padding-bottom: 14px; border-bottom: 6px solid transparent; font-size: 30px; line-height: 40px; color: #222; letter-spacing: -.5px;}
.tab.current{border-bottom-color: #bf3023; color: #bf3023; font-weight: 500;}
.cards{display: flex; flex-direction: column; gap: 6px; margin-top: 54px;}
.card{height: 222px; padding: 32px 32px 0; border-radius: 8px; background: #fff;}
.card.selected{margin-right: -49px; padding-right: 81px; border-radius: 8px 0 0 8px; background: #f8f5f0;}
.card-top{display: flex; justify-content: flex-end; align-items: center; gap: 25px; height: 32px;}
.tag{padding: 0 15px; border-radius: 4px; background: #bf3023; color: #fff; font-size: 22px; line-height: 32px; letter-spacing: -.1px;}
.card-date{font-size: 22px; color: #6b6b6b; letter-spacing: -.1px;}
.card-name{display: flex; align-items: center; gap: 45px; height: 48px; margin-top: 21px; padding-left: 4px; font-size: 30px; color: #222; letter-spacing: -.5px;}
.card-name.unread{font-weight: 600; color: #000;}
.env{flex: none; width: 40px; height: 42px; margin-top: -8px;}
.env.closed{height: 32px; margin-top: -6px;}
.card-text{margin-top: 19px; font-size: 27px; line-height: 36px; color: #222; letter-spacing: -.47px;}

/* chat */
.chat{flex: 1; min-width: 0; position: relative; display: flex; flex-direction: column; background: #f8f5f0;}
.chat-head{flex: none; height: 209px; display: flex; justify-content: space-between; padding: 49px 45px 0 47px;}
.chat-name{margin-top: 2px; font-size: 45px; font-weight: 600; line-height: 56px; color: #111; letter-spacing: -.9px;}
.chat-sub{margin-top: 18px; font-size: 22px; line-height: 28px; color: #6b6b6b; letter-spacing: -.35px;}
.chat-actions{display: flex; align-items: center; align-self: flex-start; gap: 32px;}
.round-btn{width: 64px; height: 64px; display: flex; align-items: center; justify-content: center; border-radius: 50%; background: #1c8a39;}
.round-btn svg{width: 32px; height: 32px;}
.dots{display: block; width: 34px; height: 10px;}
.dots.big{margin-left: 3px;}

.messages{flex: 1; min-height: 0; display: flex; flex-direction: column; justify-content: flex-end; overflow: hidden; padding: 0 42px 62px 47px;}
.welcome{flex: none; width: 1199px;}
.steps{display: flex; justify-content: center; gap: 127px; margin-left: 3px; height: 306px; border: 4px dashed #dcdad8; border-top: none; border-radius: 0 0 24px 24px;}
.step{flex: none; width: 300px; font-size: 30px; line-height: 48px; text-align: center; color: #222; letter-spacing: -.5px;}
.meta{display: flex; justify-content: space-between; align-items: center; height: 32px; font-size: 22px; color: #6b6b6b; letter-spacing: -.35px;}
.first-meta{margin-top: 23px;}
.check{display: block; width: 20px; height: 19px;}

.notice{flex: none; width: 965px; height: 163px; margin: 30px 0 0 660px; padding: 33px 0 0 49px; border: 2px solid #1c8a39; border-radius: 6px; background: #cfe7d6; font-size: 23.5px; line-height: 32px; color: #3a343b; letter-spacing: -.5px; white-space: nowrap;}

.day{flex: none; width: 1008px; height: 32px; margin: 65px 0 0 602px; display: flex; align-items: center;}
.day-line{flex: 1; height: 2px; background: #7a7a7a;}
.day-text{padding: 0 17px; font-size: 22px; font-weight: 500; color: #555; letter-spacing: -.4px;}

.msg{flex: none; margin-top: 43px;}
.msg-from{font-size: 22px; line-height: 28px; color: #3a343b; letter-spacing: -.35px;}
.bubble{height: 106px; margin-top: 8px; padding: 0 32px; border-radius: 24px; font-size: 31px; line-height: 106px; letter-spacing: -.5px; white-space: nowrap;}
.bubble.in{width: 700px; background: #fff; color: #222;}
.msg-time{margin-top: 5px; font-size: 22px; line-height: 32px; color: #6b6b6b; letter-spacing: -.35px;}
.msg.mine{width: 533px; align-self: flex-end;}
.msg-head{display: flex; justify-content: space-between; align-items: center;}
.msg.mine .msg-from{color: #6b6b6b;}
.msg-head .dots{margin-right: 3px;}
.bubble.out{margin-top: 18px; border-radius: 24px 24px 0 24px; background: #bf3023; color: #fff;}
.msg.mine .meta{margin-top: 6px;}

/* writing area */
.composer{flex: none; height: 320px; display: flex; align-items: flex-start; padding: 57px 0 0 255px; background: #ece7e1;}
.input{flex: none; width: 1673px; height: 210px; display: flex; border: 2px solid #dcd9dc; border-radius: 4px; background: #fff;}
.input-tools{flex: none; width: 94px; display: flex; flex-direction: column; align-items: center; justify-content: flex-end; gap: 32px; padding: 0 0 32px 12px; border-right: 4px solid #dcd9dc;}
.tool{display: block; width: 40px; height: 40px;}
.input-field{padding: 26px 0 0 16px; font-size: 28px; line-height: 40px; color: #c8c4c8; letter-spacing: -.5px;}
.send{flex: none; width: 96px; height: 96px; display: flex; align-items: center; justify-content: center; margin: 119px 0 0 29px; border-radius: 50%; background: #bf3023;}
.send svg{width: 38px; height: 33px;}

/* emoji picker lies over the chat */
.picker{position: absolute; left: 257px; top: 569px; width: 692px; height: 821px; padding: 0 0 0 23px; border: 2px solid #e8e5e1; border-radius: 28px; background: #fff;}
.picker-title{height: 88px; padding: 17px 0 0 17px; font-size: 30px; line-height: 48px; color: #9a9a9a; letter-spacing: -.5px;}
.emoji-scroll{width: 657px; padding-right: 9px; border-right: 8px solid #fafafa;}
.emoji-grid{display: grid; grid-template-columns: repeat(8, 80px); grid-auto-rows: 80px; place-items: center;}
.emo{display: block; width: 44px; height: 44px; overflow: visible;}
.emo-text{font-family: "DejaVu Sans", sans-serif; font-size: 44px; line-height: 44px; color: #000;}
.dollar{font-size: 15px; font-weight: 700; fill: #6a4a08;}
.zzz{font-size: 15px; font-weight: 800; fill: #1a3fc0;}
.picker-tabs{display: grid; grid-template-columns: repeat(8, 80px); place-items: center; height: 72px; margin-top: 17px;}
.cat{display: block; width: 38px; height: 38px;}
.picker-arrow{position: absolute; left: 38px; bottom: -25px; width: 0; height: 0; border-left: 23px solid transparent; border-right: 23px solid transparent; border-top: 24px solid #fff;}
```
